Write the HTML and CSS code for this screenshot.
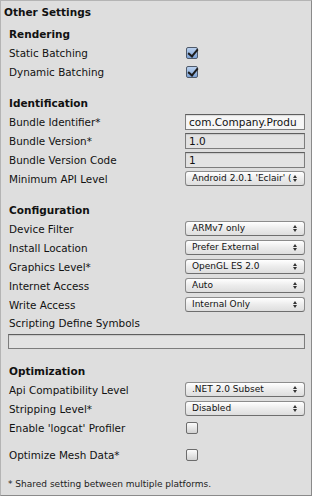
FILE: index.html
```html
<!DOCTYPE html>
<html lang="en">
<head>
  <meta charset="UTF-8" />
  <title>Other Settings</title>
  <link rel="stylesheet" href="styles.css">
</head>
<body>
  <div class="panel">
    <div class="panel-title">Other Settings</div>

    <!-- Rendering -->
    <div class="section first">
      <div class="row"><span class="heading">Rendering</span></div>
      <div class="row">
        <span class="label">Static Batching</span>
        <span class="check on"></span>
      </div>
      <div class="row">
        <span class="label">Dynamic Batching</span>
        <span class="check on"></span>
      </div>
    </div>

    <!-- Identification -->
    <div class="section">
      <div class="row"><span class="heading">Identification</span></div>
      <div class="row">
        <span class="label">Bundle Identifier*</span>
        <div class="field light">com.Company.Produ</div>
      </div>
      <div class="row">
        <span class="label">Bundle Version*</span>
        <div class="field">1.0</div>
      </div>
      <div class="row">
        <span class="label">Bundle Version Code</span>
        <div class="field">1</div>
      </div>
      <div class="row">
        <span class="label">Minimum API Level</span>
        <div class="popup"><span class="popup-text">Android 2.0.1 'Eclair' (</span></div>
      </div>
    </div>

    <!-- Configuration -->
    <div class="section">
      <div class="row"><span class="heading">Configuration</span></div>
      <div class="row">
        <span class="label">Device Filter</span>
        <div class="popup"><span class="popup-text">ARMv7 only</span></div>
      </div>
      <div class="row">
        <span class="label">Install Location</span>
        <div class="popup"><span class="popup-text">Prefer External</span></div>
      </div>
      <div class="row">
        <span class="label">Graphics Level*</span>
        <div class="popup"><span class="popup-text">OpenGL ES 2.0</span></div>
      </div>
      <div class="row">
        <span class="label">Internet Access</span>
        <div class="popup"><span class="popup-text">Auto</span></div>
      </div>
      <div class="row">
        <span class="label">Write Access</span>
        <div class="popup"><span class="popup-text">Internal Only</span></div>
      </div>
      <div class="row short">
        <span class="label">Scripting Define Symbols</span>
      </div>
      <div class="wide-row">
        <div class="field wide"></div>
      </div>
    </div>

    <!-- Optimization -->
    <div class="section opt">
      <div class="row"><span class="heading">Optimization</span></div>
      <div class="row">
        <span class="label">Api Compatibility Level</span>
        <div class="popup"><span class="popup-text">.NET 2.0 Subset</span></div>
      </div>
      <div class="row">
        <span class="label">Stripping Level*</span>
        <div class="popup"><span class="popup-text">Disabled</span></div>
      </div>
      <div class="row">
        <span class="label">Enable 'logcat' Profiler</span>
        <span class="check"></span>
      </div>
      <div class="row spaced">
        <span class="label">Optimize Mesh Data*</span>
        <span class="check"></span>
      </div>
    </div>

    <div class="note">* Shared setting between multiple platforms.</div>
  </div>
</body>
</html>
```

FILE: styles.css
```css
* {
  box-sizing: border-box;
  margin: 0;
  padding: 0;
}

body {
  font-family: 'DejaVu Sans', sans-serif;
  font-size: 10.4px;
  color: #111;
  background: #dedede;
}

.panel {
  width: 312px;
  height: 496px;
  background: #dedede;
  border: 1px solid #8a8a8a;
  border-left-color: #b4b4b4;
  border-top-color: #b4b4b4;
  overflow: hidden;
}

.panel-title {
  height: 23px;
  line-height: 23px;
  padding-left: 3px;
  font-weight: bold;
  font-size: 10.5px;
}

.section {
  margin-top: 12px;
  padding-left: 8px;
}

.section.first {
  margin-top: 0;
}

.section.opt {
  margin-top: 11px;
}

.row {
  display: flex;
  align-items: center;
  height: 19px;
}

.row.short {
  height: 18px;
}

.row.spaced {
  margin-top: 8px;
}

.heading {
  font-weight: bold;
  font-size: 10.5px;
}

.label {
  width: 176px;
  flex: none;
  white-space: nowrap;
}

.check {
  width: 12px;
  height: 12px;
  margin-left: 1px;
  border: 1px solid #6c6c6c;
  border-radius: 2px;
  background: linear-gradient(to bottom, #fbfbfb, #d2d2d2);
  position: relative;
}

.check.on {
  background: linear-gradient(to bottom, #b9d0ee, #7ea3d6);
  border-color: #4f5a6a;
}

.check.on::after {
  content: "";
  position: absolute;
  left: 3px;
  top: -1px;
  width: 4px;
  height: 8px;
  border-right: 2px solid #1c1c1c;
  border-bottom: 2px solid #1c1c1c;
  transform: rotate(40deg);
}

.field {
  width: 120px;
  height: 16px;
  line-height: 14px;
  padding-left: 3px;
  font-size: 10.5px;
  border: 1px solid #7d7d7d;
  border-top-color: #5e5e5e;
  background: #e3e3e3;
  box-shadow: inset 0 1px 1px rgba(0, 0, 0, 0.12);
  white-space: nowrap;
  overflow: hidden;
}

.field.light {
  background: #f6f6f6;
}

.wide-row {
  height: 18px;
  display: flex;
  align-items: center;
  margin-left: -1px;
}

.field.wide {
  width: 297px;
  height: 15px;
}

.popup {
  width: 120px;
  height: 15px;
  line-height: 13px;
  padding: 0 0 0 6px;
  font-size: 9px;
  border: 1px solid #8c8c8c;
  border-bottom-color: #6e6e6e;
  border-radius: 3px;
  background: linear-gradient(to bottom, #ffffff, #ececec 50%, #dedede);
  position: relative;
}

.popup-text {
  display: block;
  width: 100px;
  white-space: nowrap;
  overflow: hidden;
}

.popup::after {
  content: "";
  position: absolute;
  right: 7px;
  top: 3px;
  width: 0;
  height: 0;
  border-left: 2px solid transparent;
  border-right: 2px solid transparent;
  border-bottom: 3px solid #333;
}

.popup::before {
  content: "";
  position: absolute;
  right: 7px;
  top: 7px;
  width: 0;
  height: 0;
  border-left: 2px solid transparent;
  border-right: 2px solid transparent;
  border-top: 3px solid #333;
}

.note {
  margin-top: 15px;
  padding-left: 7px;
  font-size: 9px;
  color: #222;
}
```
